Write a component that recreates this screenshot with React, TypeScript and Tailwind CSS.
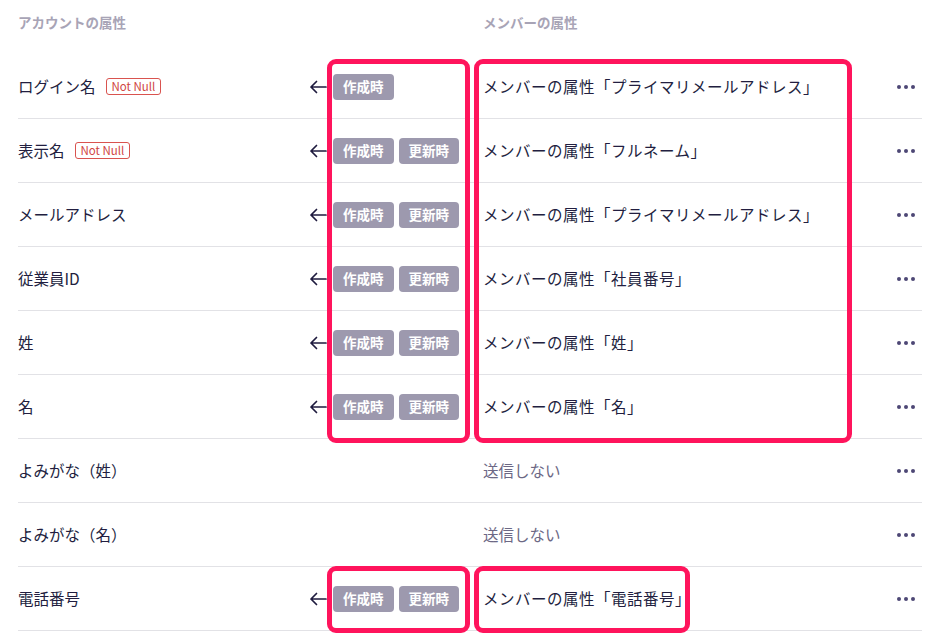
import React from "react";

type Row = {
  label: string;
  notNull?: boolean;
  tags: string[];
  member: string | null;
};

const rows: Row[] = [
  { label: "ログイン名", notNull: true, tags: ["作成時"], member: "メンバーの属性「プライマリメールアドレス」" },
  { label: "表示名", notNull: true, tags: ["作成時", "更新時"], member: "メンバーの属性「フルネーム」" },
  { label: "メールアドレス", tags: ["作成時", "更新時"], member: "メンバーの属性「プライマリメールアドレス」" },
  { label: "従業員ID", tags: ["作成時", "更新時"], member: "メンバーの属性「社員番号」" },
  { label: "姓", tags: ["作成時", "更新時"], member: "メンバーの属性「姓」" },
  { label: "名", tags: ["作成時", "更新時"], member: "メンバーの属性「名」" },
  { label: "よみがな（姓）", tags: [], member: null },
  { label: "よみがな（名）", tags: [], member: null },
  { label: "電話番号", tags: ["作成時", "更新時"], member: "メンバーの属性「電話番号」" },
];

function Dots() {
  return (
    <div className="flex items-center gap-[3px]">
      <span className="w-[4px] h-[4px] rounded-full bg-[#4d4775]" />
      <span className="w-[4px] h-[4px] rounded-full bg-[#4d4775]" />
      <span className="w-[4px] h-[4px] rounded-full bg-[#4d4775]" />
    </div>
  );
}

function Arrow() {
  return (
    <svg width="18" height="14" viewBox="0 0 18 14" fill="none">
      <path d="M17 7H2M7.5 1.5L2 7l5.5 5.5" stroke="#1f1b3f" strokeWidth="1.7" strokeLinecap="round" strokeLinejoin="round" />
    </svg>
  );
}

export default function App() {
  return (
    <div
      className="relative w-[934px] h-[637px] bg-white overflow-hidden text-[#221e40]"
      style={{ fontFamily: '"Noto Sans CJK JP", "Noto Sans", sans-serif' }}
    >
      <div className="pl-[18px] pr-[12px]">
        {/* header */}
        <div className="flex h-[55px] pt-[12px] text-[13.5px] font-bold text-[#a8a4b6]">
          <div className="w-[465px]">アカウントの属性</div>
          <div>メンバーの属性</div>
        </div>

        {rows.map((r) => (
          <div key={r.label} className="flex items-center h-[64px] border-b border-[#e2e2e6]">
            <div className="w-[290px] flex items-center gap-[10px] text-[15.5px]">
              <span>{r.label}</span>
              {r.notNull && (
                <span className="h-[17px] px-[5px] flex items-center rounded-[3px] border border-[#d9534f] text-[#d0453f] text-[11.5px] leading-none">
                  Not Null
                </span>
              )}
            </div>
            <div className="w-[25px] flex items-center pl-[1px]">
              {r.tags.length > 0 && <Arrow />}
            </div>
            <div className="w-[150px] flex items-center gap-[5px]">
              {r.tags.map((t) => (
                <span
                  key={t}
                  className="h-[26px] px-[10px] flex items-center rounded-[4px] bg-[#9d99ae] text-white text-[13.5px] font-bold"
                >
                  {t}
                </span>
              ))}
            </div>
            <div className="flex-1 text-[15.5px]">
              {r.member ? (
                <span className="tracking-[0.5px]">{r.member}</span>
              ) : (
                <span className="text-[#6c6885]">送信しない</span>
              )}
            </div>
            <div className="pr-[7px]">
              <Dots />
            </div>
          </div>
        ))}
      </div>

      {/* annotation boxes */}
      <div className="absolute left-[327px] top-[59px] w-[143px] h-[384px] border-[5px] border-[#ff145c] rounded-[9px]" />
      <div className="absolute left-[474px] top-[59px] w-[378px] h-[384px] border-[5px] border-[#ff145c] rounded-[9px]" />
      <div className="absolute left-[327px] top-[566px] w-[143px] h-[67px] border-[5px] border-[#ff145c] rounded-[9px]" />
      <div className="absolute left-[474px] top-[566px] w-[216px] h-[67px] border-[5px] border-[#ff145c] rounded-[9px]" />
    </div>
  );
}
